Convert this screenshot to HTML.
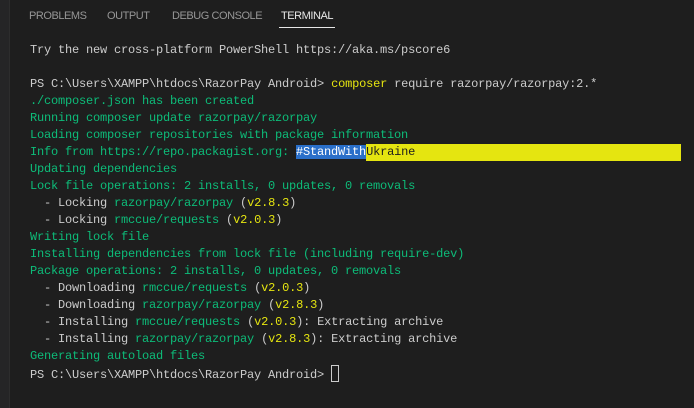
<!DOCTYPE html>
<html><head><style>
html,body{margin:0;padding:0;}
body{width:694px;height:408px;background:#1e1e1e;position:relative;overflow:hidden;font-family:"Liberation Mono",monospace;}
.strip{position:absolute;left:0;top:0;width:9px;height:408px;background:#252526;border-right:1px solid #2d2d2d;}
.tab{position:absolute;top:10px;font:11px "Liberation Sans",sans-serif;color:#969696;letter-spacing:-0.45px;}
.ul{position:absolute;left:279px;top:27px;width:56px;height:1px;background:#e7e7e7;}
pre{position:absolute;left:30px;top:42px;margin:0;font:12px/17px "Liberation Mono",monospace;letter-spacing:-0.2px;color:#cccccc;}
.g{color:#0dbc79;}
.y{color:#e5e510;}
.hb{background:#2a6fc9;color:#fff;}
.hy{background:#e5e510;color:#1e1e1e;display:inline-block;width:315px;}
.cur{display:inline-block;width:6px;height:15px;border:1px solid #cccccc;vertical-align:-4px;}
</style></head><body>
<div class="strip"></div>
<div class="tab" style="left:29px">PROBLEMS</div>
<div class="tab" style="left:107px">OUTPUT</div>
<div class="tab" style="left:172px">DEBUG CONSOLE</div>
<div class="tab" style="left:281px;color:#e7e7e7">TERMINAL</div>
<div class="ul"></div>
<pre>Try the new cross-platform PowerShell https://aka.ms/pscore6

PS C:\Users\XAMPP\htdocs\RazorPay Android&gt; <span class="y">composer</span> require razorpay/razorpay:2.*
<span class="g">./composer.json has been created
Running composer update razorpay/razorpay
Loading composer repositories with package information
Info from https://repo.packagist.org: </span><span class="hb">#StandWith</span><span class="hy">Ukraine</span>
<span class="g">Updating dependencies
Lock file operations: 2 installs, 0 updates, 0 removals</span>
  - Locking <span class="g">razorpay/razorpay</span> (<span class="y">v2.8.3</span>)
  - Locking <span class="g">rmccue/requests</span> (<span class="y">v2.0.3</span>)
<span class="g">Writing lock file
Installing dependencies from lock file (including require-dev)
Package operations: 2 installs, 0 updates, 0 removals</span>
  - Downloading <span class="g">rmccue/requests</span> (<span class="y">v2.0.3</span>)
  - Downloading <span class="g">razorpay/razorpay</span> (<span class="y">v2.8.3</span>)
  - Installing <span class="g">rmccue/requests</span> (<span class="y">v2.0.3</span>): Extracting archive
  - Installing <span class="g">razorpay/razorpay</span> (<span class="y">v2.8.3</span>): Extracting archive
<span class="g">Generating autoload files</span>
PS C:\Users\XAMPP\htdocs\RazorPay Android&gt; <span class="cur"></span></pre>
</body></html>
